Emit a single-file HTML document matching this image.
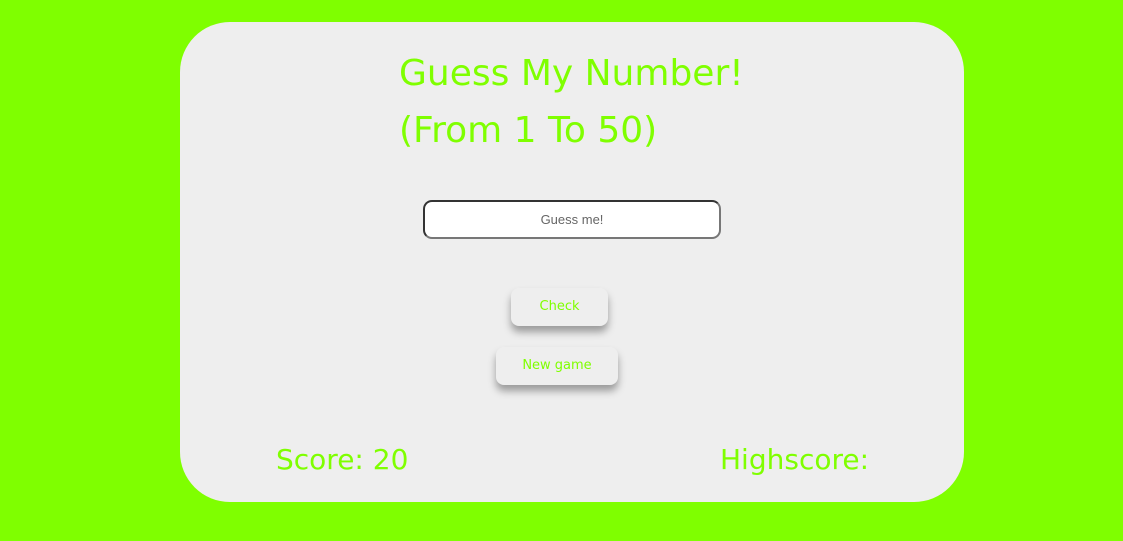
<!DOCTYPE html>
<html><head><style>
html,body{margin:0;padding:0;width:1123px;height:541px;background:#7fff00;overflow:hidden;font-family:"Comic Sans MS","DejaVu Sans",sans-serif;}
.card{position:absolute;left:180px;top:22px;width:784px;height:480px;background:#eeeeee;border-radius:50px;}
h1{position:absolute;left:219px;top:23px;margin:0;font-weight:normal;color:#7fff00;font-size:36px;line-height:57px;}
.inp{position:absolute;left:243px;top:178px;width:298px;height:39px;box-sizing:border-box;border:2px solid #333;border-right-color:#777;border-bottom-color:#777;border-radius:9px;background:#fff;text-align:center;line-height:35px;font-family:"Liberation Sans",sans-serif;font-size:13px;color:#666;}
.btn{position:absolute;height:38px;background:#eee;border-radius:8px;box-shadow:0 6px 8px rgba(0,0,0,0.35);color:#7fff00;font-size:13px;text-align:center;line-height:38px;}
.s{position:absolute;top:421px;color:#7fff00;font-size:28px;}
</style></head><body>
<div class="card">
<h1>Guess My Number!<br>(From 1 To 50)</h1>
<div class="inp">Guess me!</div>
<div class="btn" style="left:331px;top:266px;width:97px;">Check</div>
<div class="btn" style="left:316px;top:325px;width:122px;">New game</div>
<div class="s" style="left:96px;">Score: 20</div>
<div class="s" style="left:540px;">Highscore:</div>
</div>
</body></html>
